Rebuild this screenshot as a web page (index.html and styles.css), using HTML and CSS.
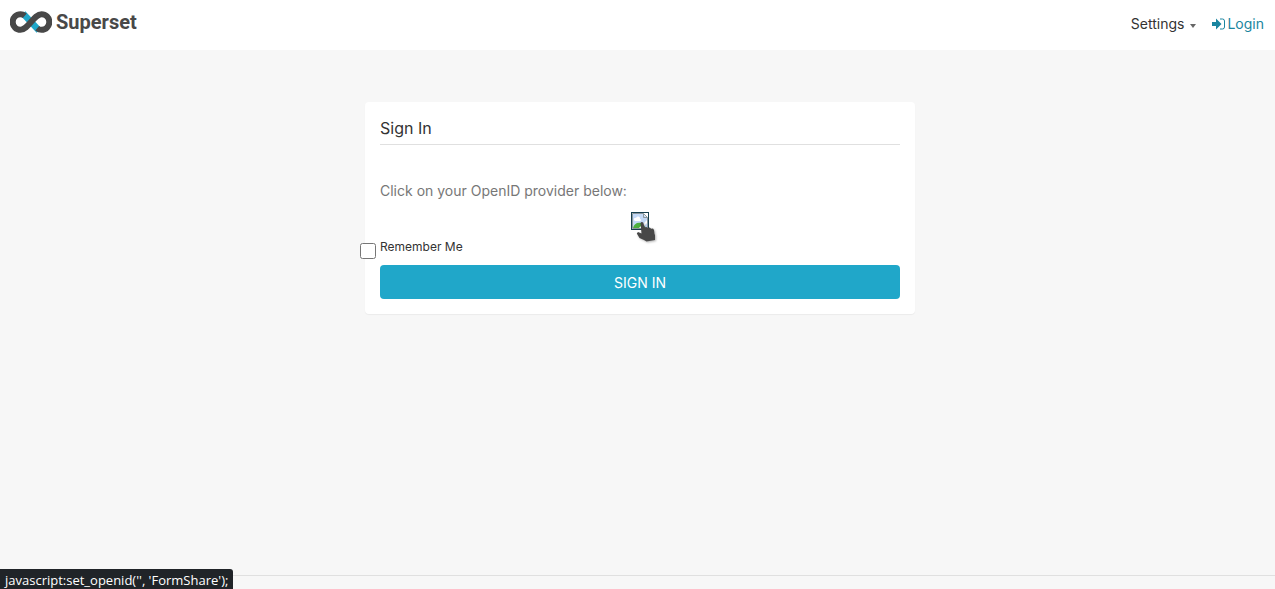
FILE: index.html
```html
<!DOCTYPE html>
<html lang="en">
<head>
    <meta charset="UTF-8">
    <meta name="viewport" content="width=device-width, initial-scale=1.0">
    <title>Superset</title>
    <link rel="stylesheet" href="styles.css">
</head>
<body>
    <header class="navbar">
        <a class="brand" href="#">
            <svg class="brand-mark" viewBox="0 0 42 22" fill="none" stroke-width="6">
                <path d="M13 2.500L29 19.500" stroke="#20a7c9" stroke-width="6.500"/>
                <path d="M14.800 4.800C13.500 3.700 12 3.200 10.500 3.200a7.800 7.800 0 0 0 0 15.600C18 18.800 24 3.200 31.500 3.200a7.800 7.800 0 0 1 0 15.600C30 18.800 28.500 18.300 27.200 17.200" stroke="#484848"/>
            </svg>
            <span class="brand-name">Superset</span>
        </a>
        <nav class="menu">
            <a class="menu-link" href="#">Settings <span class="caret"></span></a>
            <a class="menu-link login" href="#">
                <svg class="login-icon" viewBox="0 0 13 12">
                    <path d="M0 4h4V.500L9.500 6 4 11.500V8H0z" fill="#1a85a0"/>
                    <path d="M8 1h2.500a2 2 0 0 1 2 2v6a2 2 0 0 1-2 2H8" fill="none" stroke="#1a85a0"/>
                </svg>Login
            </a>
        </nav>
    </header>

    <main class="content">
        <form class="panel">
            <h1 class="panel-title">Sign In</h1>
            <p class="help">Click on your OpenID provider below:</p>
            <div class="providers">
                <a class="provider" href="#" aria-label="FormShare">
                    <svg class="broken-image" viewBox="0 0 18 18">
                        <path d="M0 0h18v18H0z" fill="#173f50"/>
                        <path d="M1 1h16v16H1z" fill="#fff"/>
                        <path d="M2 2h10l4 4v10H2z" fill="#c3d9f7"/>
                        <path d="M3 8a1.500 1.500 0 0 1 2-2 2 2 0 0 1 4 1 1 1 0 0 1 0 2H4z" fill="#fff"/>
                        <path d="M2 16c1-4 4-6 8-5l5 5z" fill="#4caf3f"/>
                        <path d="M16 8L8 16h3l5-5z" fill="#fff"/>
                        <path d="M1.500 1.500h11l4 4v11h-15zM12.500 1.500v4h4" fill="none" stroke="#8b979d"/>
                    </svg>
                    <svg class="pointer" viewBox="0 0 20 22">
                        <path d="M4.500 2C5 .500 6.800.500 7.300 2l1.500 4.500 1.500-.500 1.500 1 2-.500 1.300 1.200 1.900-.200 1 1.500.500 4 .500 1v5l-8.500 1.500L8 19 3.500 17 .800 12.500 2 11l3.500 1.500z" fill="#484848"/>
                    </svg>
                </a>
            </div>
            <div class="remember">
                <input type="checkbox" id="remember">
                <label for="remember">Remember Me</label>
            </div>
            <button class="submit" type="button">SIGN IN</button>
        </form>
    </main>

    <footer class="footer"></footer>
    <div class="status">javascript:set_openid('', 'FormShare');</div>
</body>
</html>
```

FILE: styles.css
```css
* {
    box-sizing: border-box;
}
body {
    display: flex;
    flex-direction: column;
    min-height: 100vh;
    margin: 0;
    background-color: #f7f7f7;
    color: #333;
    font-family: Inter, "Liberation Sans", sans-serif;
    font-size: 14px;
    line-height: 20px;
}
a {
    text-decoration: none;
}
.navbar {
    display: flex;
    justify-content: space-between;
    height: 50px;
    padding: 0 11px 0 10px;
    background-color: #fff;
}
.brand {
    display: flex;
    align-items: center;
    gap: 4px;
    height: 43px;
    color: #484848;
}
.brand-mark {
    width: 42px;
    height: 22px;
}
.brand-name {
    font-family: Roboto, sans-serif;
    font-size: 20px;
    font-weight: 700;
}
.menu {
    display: flex;
    align-items: center;
    gap: 16px;
    height: 48px;
}
.menu-link {
    display: flex;
    align-items: center;
    color: #333;
}
.caret {
    margin: 4px 0 0 6px;
    border: 3px solid transparent;
    border-top: 4px solid #666;
    border-bottom: 0;
}
.login {
    gap: 2px;
    color: #1a85a0;
}
.login-icon {
    width: 13px;
    height: 12px;
}
.content {
    flex: 1;
    padding: 52px 0 0 5px;
}
.panel {
    max-width: 550px;
    margin: 0 auto;
    padding: 16px 15px 15px;
    border-radius: 4px;
    background-color: #fff;
    box-shadow: 0 1px 1px rgba(0, 0, 0, 0.05);
}
.panel-title {
    margin: 0 0 36px;
    padding-bottom: 6px;
    border-bottom: 1px solid #e0e0e0;
    font-size: 16px;
    font-weight: 400;
}
.help {
    margin: 0 0 11px;
    color: #777;
}
.providers {
    display: flex;
    justify-content: center;
}
.provider {
    position: relative;
    height: 18px;
}
.broken-image {
    display: block;
    width: 18px;
    height: 18px;
}
.pointer {
    position: absolute;
    top: 9px;
    left: 5px;
    width: 20px;
    height: 22px;
    filter: drop-shadow(1px 1px 1px rgba(0, 0, 0, 0.3));
}
.remember {
    display: flex;
    gap: 4px;
    margin: 7px 0 6px -20px;
    font-size: 12px;
}
.remember input {
    width: 16px;
    height: 16px;
    margin: 6px 0 0;
}
.remember label {
    line-height: 20px;
}
.submit {
    display: block;
    width: 100%;
    height: 34px;
    padding: 2px 0 0;
    border: 0;
    border-radius: 4px;
    background-color: #20a7c9;
    color: #fff;
    font: inherit;
    cursor: pointer;
}
.footer {
    height: 14px;
    border-top: 1px solid #e0e0e0;
}
.status {
    position: fixed;
    bottom: 0;
    left: 0;
    height: 20px;
    padding: 1px 5px;
    border-top-right-radius: 3px;
    background-color: #202428;
    color: #fff;
    font-family: "Open Sans", "Noto Sans", sans-serif;
    font-size: 13px;
}
```
